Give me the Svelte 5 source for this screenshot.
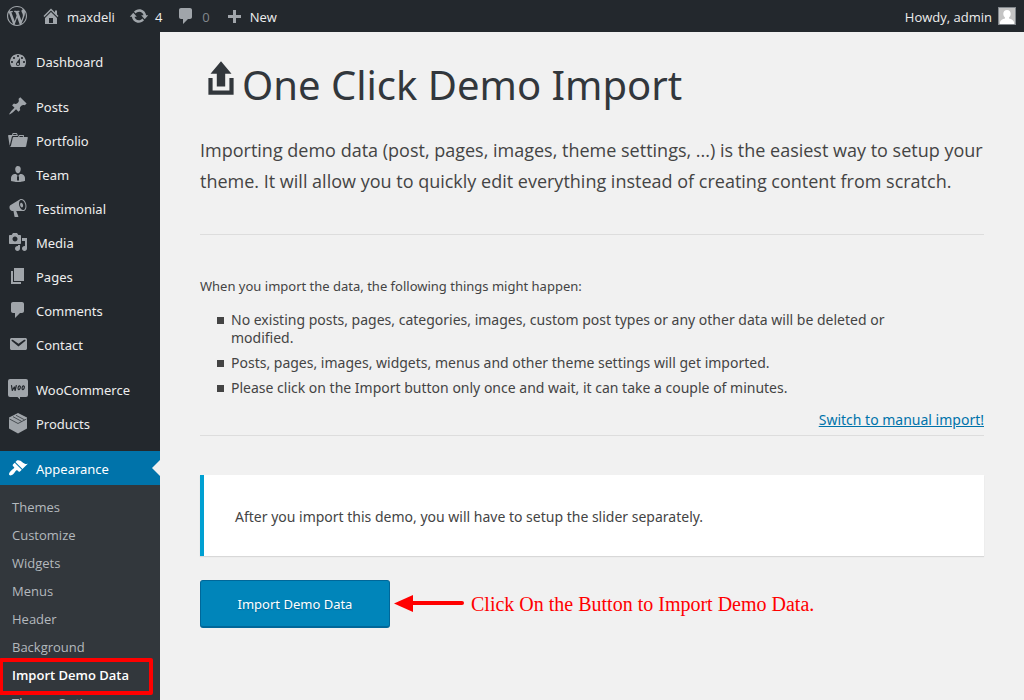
<script>
  const icons = {
    wordpress: 'M20 10c0-5.51-4.49-10-10-10C4.48 0 0 4.49 0 10c0 5.52 4.48 10 10 10 5.51 0 10-4.48 10-10zM7.78 15.37L4.37 6.22c.55-.02 1.17-.08 1.17-.08.5-.06.44-1.13-.06-1.11 0 0-1.45.11-2.37.11-.18 0-.37 0-.58-.01C4.12 2.69 6.87 1.11 10 1.11c2.33 0 4.45.87 6.05 2.34-.68-.11-1.65.39-1.65 1.58 0 .74.45 1.36.9 2.1.35.61.55 1.36.55 2.46 0 1.49-1.4 5-1.4 5l-3.03-8.37c.54-.02.82-.17.82-.17.5-.05.44-1.25-.06-1.22 0 0-1.44.12-2.38.12-.87 0-2.33-.12-2.33-.12-.5-.03-.56 1.2-.06 1.22l.92.08 1.26 3.41zM17.41 10c.24-.64.74-1.87.43-4.25.7 1.29 1.05 2.71 1.05 4.25 0 3.29-1.73 6.24-4.4 7.78.97-2.59 1.94-5.2 2.92-7.78zM6.1 18.09C3.12 16.65 1.11 13.53 1.11 10c0-1.3.23-2.48.72-3.59C3.25 10.3 4.67 14.2 6.1 18.09zm4.03-6.63l2.58 6.98c-.86.29-1.76.45-2.71.45-.79 0-1.57-.11-2.29-.33.81-2.38 1.62-4.74 2.42-7.1z',
    home: 'M16 8.5l1.53 1.53-1.06 1.06L10 4.6l-6.47 6.49-1.06-1.06L10 2.5l4 4v-2h2v4zm-6-2.46l6 5.99V18H4v-5.97zM12 17v-5H8v5h4z',
    update: 'M10.2 3.28c3.53 0 6.43 2.61 6.92 6h2.08l-3.5 4-3.5-4h2.32c-.45-1.97-2.21-3.45-4.32-3.45-1.45 0-2.73.71-3.54 1.78L4.95 5.66C6.23 4.2 8.11 3.28 10.2 3.28zm-.4 13.44c-3.52 0-6.43-2.61-6.92-6H.8l3.5-4c1.17 1.33 2.33 2.67 3.5 4H5.48c.45 1.97 2.21 3.45 4.32 3.45 1.45 0 2.73-.71 3.54-1.78l1.71 1.95c-1.28 1.46-3.15 2.38-5.25 2.38z',
    comments: 'M5 2h9c1.1 0 2 .9 2 2v7c0 1.1-.9 2-2 2h-2l-5 5v-5H5c-1.1 0-2-.9-2-2V4c0-1.1.9-2 2-2z',
    plus: 'M17 9v3h-5v5H9v-5H4V9h5V4h3v5h5z',
    dashboard: 'M3.76 16h12.48c1.1-1.37 1.76-3.11 1.76-5 0-4.42-3.58-8-8-8s-8 3.58-8 8c0 1.89.66 3.63 1.76 5zM10 4c.55 0 1 .45 1 1s-.45 1-1 1-1-.45-1-1 .45-1 1-1zM6 6c.55 0 1 .45 1 1s-.45 1-1 1-1-.45-1-1 .45-1 1-1zm8 0c.55 0 1 .45 1 1s-.45 1-1 1-1-.45-1-1 .45-1 1-1zm-5.37 5.55L12 7v6c0 1.1-.9 2-2 2s-2-.9-2-2c0-.57.24-1.08.63-1.45zM4 10c.55 0 1 .45 1 1s-.45 1-1 1-1-.45-1-1 .45-1 1-1zm12 0c.55 0 1 .45 1 1s-.45 1-1 1-1-.45-1-1 .45-1 1-1zm-5 3c0-.55-.45-1-1-1s-1 .45-1 1 .45 1 1 1 1-.45 1-1z',
    post: 'M10.44 3.02l1.82-1.82 6.36 6.35-1.83 1.82c-1.05-.68-2.48-.57-3.41.36l-.75.75c-.92.93-1.04 2.35-.35 3.41l-1.83 1.82-2.41-2.41-2.8 2.79c-.42.42-3.38 2.71-3.8 2.29s1.86-3.39 2.28-3.81l2.79-2.79L4.1 9.36l1.83-1.82c1.05.69 2.48.57 3.4-.36l.75-.75c.93-.92 1.05-2.35.36-3.41z',
    portfolio: 'M4 5H.78c-.37 0-.74.32-.69.84l1.56 9.99S3.5 8.47 3.86 6.7c.11-.53.61-.7.98-.7H10s-.7-2.08-.77-2.31C9.11 3.25 8.89 3 8.45 3H5.14c-.36 0-.7.23-.8.64C4.25 4.04 4 5 4 5zm4.88 0h-4s.42-1 .87-1h2.13c.48 0 1 1 1 1zM2.67 16.25c-.31.47-.76.75-1.26.75h15.73c.54 0 .92-.31 1.03-.83.44-2.19 1.68-8.44 1.68-8.44.07-.5-.3-.73-.62-.73H16V5.53c0-.16-.26-.53-.66-.53h-3.76c-.52 0-.87.58-.87.58L10 7H5.59c-.32 0-.63.19-.69.5 0 0-1.59 6.7-1.72 7.33-.07.37-.22.99-.51 1.42zM15.38 7H11s.58-1 1.13-1h2.29c.71 0 .96 1 .96 1z',
    team: 'M7.3 6l-.03-.19c-.04-.37-.05-.73-.03-1.08.02-.36.1-.71.25-1.04.14-.32.31-.61.52-.86s.49-.46.83-.6c.34-.15.72-.23 1.13-.23.69 0 1.26.2 1.71.59s.76.87.91 1.44.18 1.16.09 1.78l-.03.19c-.01.09-.05.25-.11.48-.05.24-.12.47-.2.69-.08.21-.19.45-.34.72-.14.27-.3.49-.47.69-.18.19-.4.34-.67.48-.27.13-.55.19-.86.19s-.59-.06-.87-.19c-.26-.13-.49-.29-.67-.5-.18-.2-.34-.42-.49-.66-.15-.25-.26-.49-.34-.73-.09-.25-.16-.47-.21-.67-.06-.21-.1-.37-.12-.5zm9.2 6.24c.41.7.5 1.41.5 2.14v2.49c0 .03-.12.08-.29.13-.18.04-.42.13-.97.27-.55.12-1.1.24-1.65.34s-1.19.19-1.95.27c-.75.08-1.46.12-2.13.12-.68 0-1.39-.04-2.14-.12-.75-.07-1.4-.17-1.98-.27-.58-.11-1.08-.23-1.56-.34-.49-.11-.8-.21-1.06-.29L3 16.87v-2.49c0-.75.07-1.46.46-2.15s.81-1.25 1.5-1.68C5.66 10.12 7.19 10 8 10l1.67 1.67L9 13v3l1.02 1.08L11 16v-3l-.68-1.33L11.97 10c.77 0 2.2.07 2.9.52.71.45 1.21 1.02 1.63 1.72z',
    megaphone: 'M18.15 5.94c.46 1.62.38 3.22-.02 4.48-.42 1.28-1.26 2.18-2.3 2.48-.16.06-.26.06-.4.06-.06.02-.12.02-.18.02-.06.02-.14.02-.22.02h-6.8l2.22 5.5c.02.14-.06.26-.14.34-.08.1-.24.16-.34.16H6.95c-.1 0-.26-.06-.34-.16-.08-.08-.16-.2-.14-.34l-1-5.5H4.25l-.02-.02c-.5.06-1.08-.18-1.54-.62s-.88-1.08-1.06-1.88c-.24-.8-.2-1.56-.02-2.2.18-.62.58-1.08 1.06-1.3l.02-.02 9-5.4c.1-.06.18-.1.24-.16.06-.04.14-.08.24-.12.16-.08.28-.12.5-.18 1.04-.3 2.24.1 3.22.98s1.84 2.24 2.26 3.86zm-2.58 5.98h-.02c.4-.1.74-.34 1.04-.7.58-.7.86-1.76.86-3.04 0-.64-.1-1.3-.28-1.98-.34-1.36-1.02-2.5-1.78-3.24s-1.68-1.1-2.46-.88c-.82.22-1.4.96-1.7 2-.32 1.04-.28 2.36.06 3.72.38 1.36 1 2.5 1.8 3.24.78.74 1.62 1.1 2.48.88zm-2.54-7.08c.22-.04.42-.02.62.04.38.16.76.48 1.02 1s.42 1.2.42 1.78c0 .3-.04.56-.12.8-.18.48-.44.84-.86.94-.34.1-.8-.06-1.14-.4s-.64-.86-.78-1.5c-.18-.62-.12-1.24.02-1.72s.48-.84.82-.94z',
    media: 'M13 11V4c0-.55-.45-1-1-1h-1.67L9 1H5L3.67 3H2c-.55 0-1 .45-1 1v7c0 .55.45 1 1 1h10c.55 0 1-.45 1-1zM7 4.5c1.38 0 2.5 1.12 2.5 2.5S8.38 9.5 7 9.5 4.5 8.38 4.5 7 5.62 4.5 7 4.5zM14 6h5v10.5c0 1.38-1.12 2.5-2.5 2.5S14 17.88 14 16.5s1.12-2.5 2.5-2.5c.17 0 .34.02.5.05V9h-3V6zm-4 8.05V13h2v3.5c0 1.38-1.12 2.5-2.5 2.5S7 17.88 7 16.5 8.12 14 9.5 14c.17 0 .34.02.5.05z',
    page: 'M6 15V2h10v13H6zm-1 1h8v2H3V5h2v11z',
    email: 'M3.87 4h13.25C18.37 4 19 4.59 19 5.79v8.42c0 1.19-.63 1.79-1.88 1.79H3.87c-1.25 0-1.88-.6-1.88-1.79V5.79c0-1.2.63-1.79 1.88-1.79zm6.62 8.6l6.74-5.53c.24-.2.43-.66.13-1.07-.29-.41-.82-.42-1.17-.17l-5.7 3.86L4.8 5.83c-.35-.25-.88-.24-1.17.17-.3.41-.11.87.13 1.07z',
    appearance: 'M14.48 11.06L7.41 3.99l1.5-1.5c.5-.56 2.3-.47 3.51.32 1.21.8 1.43 1.28 2.91 2.1 1.18.64 2.45 1.26 4.45.85zm-.71.71L6.7 4.7 4.93 6.47c-.39.39-.39 1.02 0 1.41l1.06 1.06c.39.39.39 1.03 0 1.42-.6.6-1.43 1.11-2.21 1.69-.35.26-.7.53-1.01.84C1.43 14.23.4 16.08 1.4 17.07c.99 1 2.84-.03 4.18-1.36.31-.31.58-.66.85-1.02.57-.78 1.08-1.61 1.69-2.21.39-.39 1.02-.39 1.41 0l1.06 1.06c.39.39 1.02.39 1.41 0z',
    upload: 'M8 14V8H5l5-6 5 6h-3v6H8zm-2 2v-6H4v8h12v-8h-2v6H6z'
  };

  const groups = [
    [{ label: 'Dashboard', icon: 'dashboard' }],
    [
      { label: 'Posts', icon: 'post' },
      { label: 'Portfolio', icon: 'portfolio' },
      { label: 'Team', icon: 'team' },
      { label: 'Testimonial', icon: 'megaphone' },
      { label: 'Media', icon: 'media' },
      { label: 'Pages', icon: 'page' },
      { label: 'Comments', icon: 'comments' },
      { label: 'Contact', icon: 'email' }
    ],
    [
      { label: 'WooCommerce', icon: 'woo' },
      { label: 'Products', icon: 'box' }
    ],
    [{ label: 'Appearance', icon: 'appearance', current: true }]
  ];

  const submenu = ['Themes', 'Customize', 'Widgets', 'Menus', 'Header', 'Background', 'Import Demo Data', 'Theme Options'];
  const currentSub = 'Import Demo Data';

  const notes = [
    'No existing posts, pages, categories, images, custom post types or any other data will be deleted or modified.',
    'Posts, pages, images, widgets, menus and other theme settings will get imported.',
    'Please click on the Import button only once and wait, it can take a couple of minutes.'
  ];
</script>

{#snippet icon(name)}
  <svg class="icon" viewBox="0 0 20 20" aria-hidden="true">
    {#if name === 'woo'}
      <path d="M2 0h16a2 2 0 0 1 2 2v14a2 2 0 0 1-2 2h-6v2.500L9.500 18H2a2 2 0 0 1-2-2V2a2 2 0 0 1 2-2z" />
      <g fill="none" stroke="#23282d" stroke-width="1.2" stroke-linecap="round" stroke-linejoin="round">
        <path d="M3.500 6.500l.8 5 2-3.500.8 3.500 1.200-5" />
        <ellipse cx="11.200" cy="8.700" rx="1.100" ry="1.900" transform="rotate(14 11.200 8.700)" />
        <ellipse cx="15.200" cy="8.700" rx="1.100" ry="1.900" transform="rotate(14 15.200 8.700)" />
      </g>
    {:else if name === 'box'}
      <path d="M10 0l9 4.500v11l-9 5-9-5v-11z" />
      <path d="M1.500 6L10 10.500 18.500 6M5 3.700l8.500 4.600M8 2.300l8.500 4.500" fill="none" stroke="#23282d" stroke-width="0.7" />
    {:else}
      <path d={icons[name]} />
    {/if}
  </svg>
{/snippet}

<header class="adminbar">
  <nav class="bar-links" aria-label="Toolbar">
    <a href="#about" aria-label="About WordPress">{@render icon('wordpress')}</a>
    <a href="#site">{@render icon('home')}<span>maxdeli</span></a>
    <a href="#updates">{@render icon('update')}<span>4</span></a>
    <a href="#comments" class="muted">{@render icon('comments')}<span>0</span></a>
    <a href="#new">{@render icon('plus')}<span>New</span></a>
  </nav>
  <a class="account" href="#profile">
    <span>Howdy, admin</span>
    <svg class="avatar" viewBox="0 0 18 18" aria-hidden="true">
      <rect width="18" height="18" fill="#82878c" />
      <rect x="1" y="1" width="16" height="16" fill="#c4c4c4" />
      <path d="M9 3c2.300 0 3.700 1.600 3.700 3.800 0 1.700-.7 3-1.700 3.700v1c2.600.5 4.300 1.500 5 3.500v2H2v-2c.7-2 2.400-3 5-3.500v-1C6 9.800 5.300 8.500 5.300 6.800 5.300 4.600 6.700 3 9 3z" fill="#fff" />
    </svg>
  </a>
</header>

<div class="layout">
  <nav class="sidebar" aria-label="Main menu">
    {#each groups as group}
      <ul class="group">
        {#each group as item}
          <li>
            <a class="item" class:current={item.current} href="#{item.label.toLowerCase()}">
              {@render icon(item.icon)}<span>{item.label}</span>
            </a>
          </li>
        {/each}
      </ul>
    {/each}
    <ul class="submenu">
      {#each submenu as label}
        <li><a class:selected={label === currentSub} href="#appearance">{label}</a></li>
      {/each}
    </ul>
  </nav>

  <main>
    <h1>{@render icon('upload')}One Click Demo Import</h1>
    <p class="intro">
      Importing demo data (post, pages, images, theme settings, ...) is the easiest way to setup your
      theme. It will allow you to quickly edit everything instead of creating content from scratch.
    </p>
    <hr />
    <section class="notes">
      <p>When you import the data, the following things might happen:</p>
      <ul>
        {#each notes as note}
          <li>{note}</li>
        {/each}
      </ul>
      <a class="switch" href="#manual">Switch to manual import!</a>
    </section>
    <hr />
    <div class="notice">After you import this demo, you will have to setup the slider separately.</div>
    <div class="action">
      <button type="button">Import Demo Data</button>
      <svg class="arrow" viewBox="0 0 70 18" aria-hidden="true">
        <path d="M0 9.500L19 1v17z" fill="#f00" />
        <path d="M18 9h50" stroke="#f00" stroke-width="4" stroke-linecap="round" />
      </svg>
      <span class="hint">Click On the Button to Import Demo Data.</span>
    </div>
  </main>
</div>

<style>
  :global(body) {
    margin: 0;
    background: #f1f1f1;
    color: #444;
    font-family: 'Noto Sans', 'Open Sans', sans-serif;
    font-size: 13px;
  }
  a {
    color: inherit;
    text-decoration: none;
  }
  ul {
    list-style: none;
    margin: 0;
    padding: 0;
  }
  .icon {
    width: 20px;
    height: 20px;
    flex: none;
    overflow: visible;
    fill: #a0a5aa;
  }
  .adminbar {
    display: flex;
    justify-content: space-between;
    align-items: center;
    height: 32px;
    padding: 0 8px 0 7px;
    box-sizing: border-box;
    background: #23282d;
    color: #eee;
    font-family: 'Open Sans', 'Noto Sans', sans-serif;
    line-height: 32px;
  }
  .bar-links {
    display: flex;
    gap: 14px;
  }
  .bar-links a,
  .account {
    display: flex;
    align-items: center;
    gap: 6px;
  }
  .adminbar span,
  .item span {
    padding-top: 2px;
  }
  .muted span {
    color: #82878c;
  }
  .avatar {
    width: 18px;
    height: 18px;
  }
  .layout {
    display: flex;
    height: calc(100vh - 32px);
  }
  .sidebar {
    flex: none;
    width: 160px;
    box-sizing: border-box;
    padding-top: 12px;
    overflow: hidden;
    background: #23282d;
    color: #eee;
  }
  .group + .group {
    margin-top: 11px;
  }
  .item {
    position: relative;
    display: flex;
    align-items: center;
    gap: 8px;
    height: 34px;
    padding-left: 8px;
  }
  .current {
    background: #0073aa;
    color: #fff;
  }
  .current .icon {
    fill: #fff;
  }
  .current::after {
    content: '';
    position: absolute;
    top: 9px;
    right: 0;
    border: 8px solid transparent;
    border-left-width: 0;
    border-right-color: #f1f1f1;
  }
  .submenu {
    padding-top: 8px;
    background: #32373c;
    color: #b4b9be;
    font-family: 'Open Sans', 'Noto Sans', sans-serif;
  }
  .submenu a {
    position: relative;
    display: block;
    padding-left: 12px;
    line-height: 28px;
  }
  .submenu .selected {
    color: #fff;
    font-weight: 600;
  }
  .selected::after {
    content: '';
    position: absolute;
    inset: -3px 7px -6px -1px;
    border: 4px solid #f00;
    border-radius: 2px;
  }
  main {
    flex: 1;
    min-width: 0;
    padding: 24px 40px;
    overflow: hidden;
  }
  h1 {
    display: flex;
    align-items: flex-start;
    margin: 0;
    color: #32373c;
    font-size: 40px;
    font-weight: 400;
    line-height: 58px;
  }
  h1 .icon {
    width: 42px;
    height: 42px;
    padding-top: 1px;
    fill: #32373c;
  }
  .intro {
    margin: 21px 0 37px;
    font-family: 'Open Sans', 'Noto Sans', sans-serif;
    font-size: 18px;
    line-height: 31px;
  }
  hr {
    margin: 0;
    border: 0;
    border-top: 1px solid #ddd;
  }
  .notes {
    display: flex;
    flex-direction: column;
    padding: 41px 0 5px;
  }
  .notes p {
    margin: 0 0 15px;
    line-height: 20px;
  }
  .notes ul {
    max-width: 700px;
    padding-left: 17px;
  }
  .notes li {
    position: relative;
    margin-bottom: 7px;
    padding-left: 14px;
    font-size: 14px;
    line-height: 18px;
  }
  .notes li::before {
    content: '';
    position: absolute;
    top: 6px;
    left: 0;
    width: 7px;
    height: 7px;
    background: #444;
  }
  .switch {
    align-self: flex-end;
    margin-top: 6px;
    color: #0073aa;
    font-size: 14px;
    line-height: 20px;
    text-decoration: underline;
  }
  .notice {
    margin-top: 39px;
    padding: 31px 31px 29px;
    border-left: 4px solid #00a0d2;
    background: #fff;
    box-shadow: 0 1px 1px rgba(0, 0, 0, 0.1);
    font-size: 14px;
    line-height: 21px;
  }
  .action {
    display: flex;
    align-items: center;
    margin-top: 24px;
  }
  button {
    width: 190px;
    height: 48px;
    flex: none;
    border: 1px solid #006799;
    border-bottom-width: 2px;
    border-radius: 3px;
    background: #0085ba;
    color: #fff;
    font: inherit;
    text-shadow: 0 1px 1px #006799;
  }
  .arrow {
    width: 70px;
    height: 18px;
    flex: none;
    margin: 0 7px 3px 4px;
  }
  .hint {
    color: #f00;
    font-family: 'Liberation Serif', serif;
    font-size: 20px;
  }
</style>
